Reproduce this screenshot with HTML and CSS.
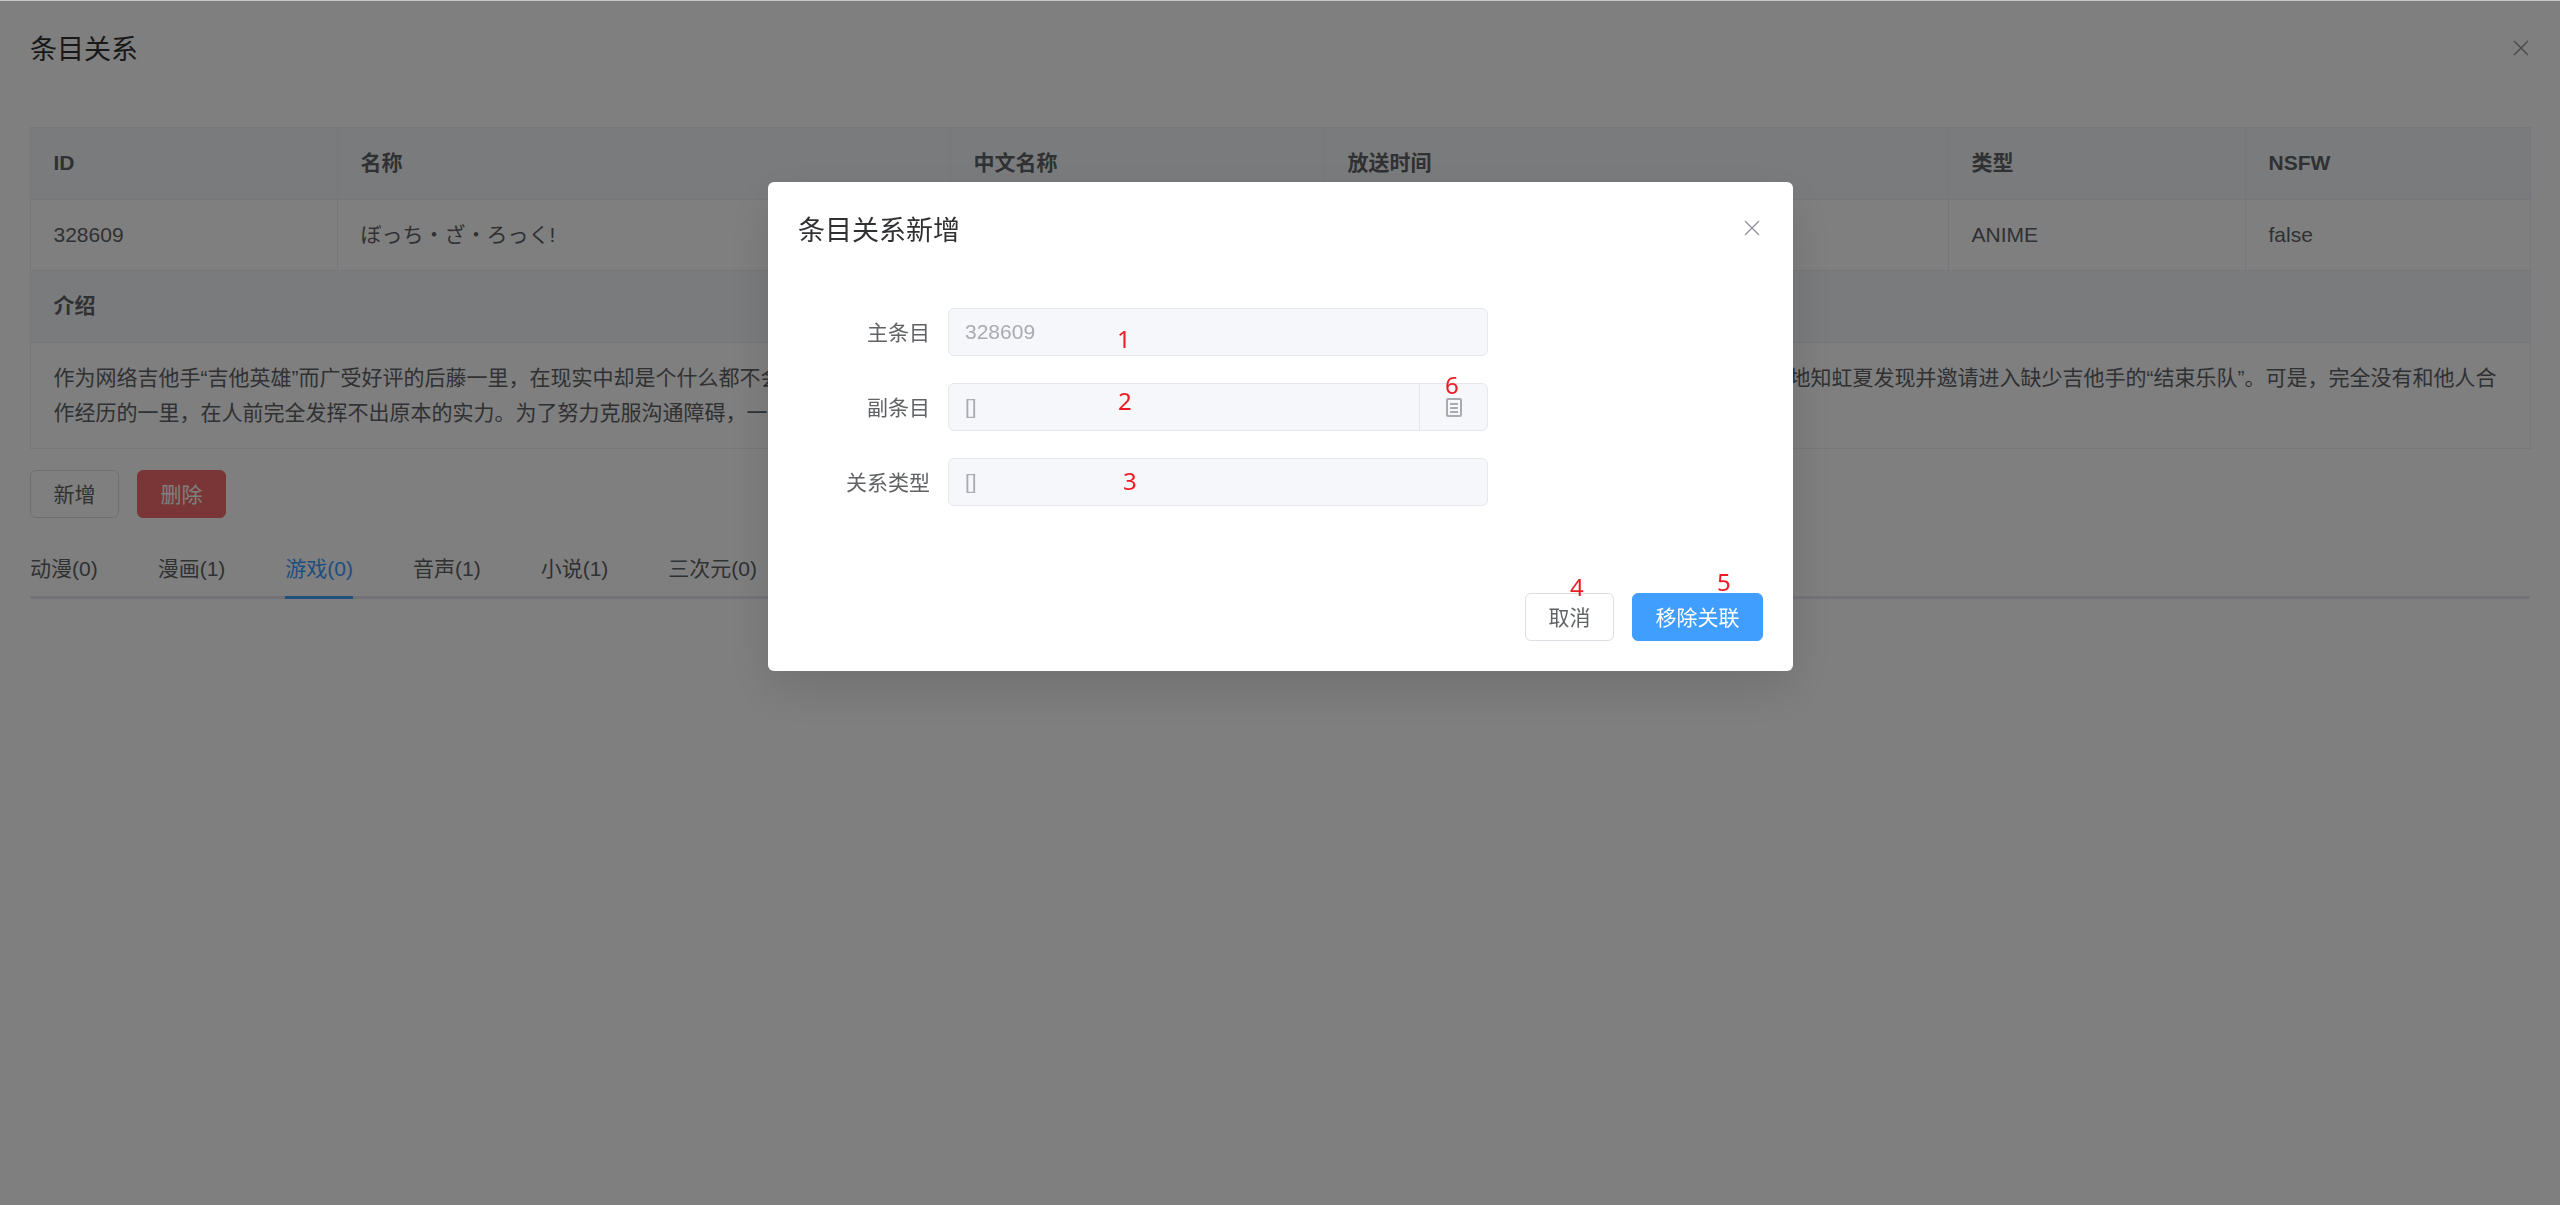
FILE: index.html
```html
<!DOCTYPE html>
<html lang="zh-CN">
<head>
  <meta charset="UTF-8">
  <meta name="viewport" content="width=device-width, initial-scale=1.0">
  <title>条目关系</title>
  <link rel="stylesheet" href="styles.css">
</head>
<body>

  <div class="page">
    <div class="page-header">
      <span class="page-title">条目关系</span>
      <svg class="close-icon page-close" viewBox="0 0 16 16"><path d="M1 1L15 15M15 1L1 15"/></svg>
    </div>

    <table class="info">
      <colgroup>
        <col class="col-id">
        <col class="col-name">
        <col class="col-cn">
        <col class="col-date">
        <col class="col-type">
        <col class="col-nsfw">
      </colgroup>
      <tr class="row-head">
        <th>ID</th>
        <th>名称</th>
        <th>中文名称</th>
        <th>放送时间</th>
        <th>类型</th>
        <th>NSFW</th>
      </tr>
      <tr class="row-body">
        <td>328609</td>
        <td>ぼっち・ざ・ろっく!</td>
        <td>孤独摇滚！</td>
        <td>2022-10-08</td>
        <td>ANIME</td>
        <td>false</td>
      </tr>
      <tr class="row-head">
        <th colspan="6">介绍</th>
      </tr>
      <tr class="row-summary">
        <td colspan="6">作为网络吉他手“吉他英雄”而广受好评的后藤一里，在现实中却是个什么都不会的超社恐阴角少女。虽然她总是渴望着能加入乐队，却因为不敢与人交流而一直独自练琴。某天，偶然她被伊地知虹夏发现并邀请进入缺少吉他手的“结束乐队”。可是，完全没有和他人合<br>作经历的一里，在人前完全发挥不出原本的实力。为了努力克服沟通障碍，一里在“结束乐队”中一点点地成长起来。</td>
      </tr>
    </table>

    <div class="actions">
      <button class="btn">新增</button>
      <button class="btn btn-danger">删除</button>
    </div>

    <div class="tabs">
      <div class="tab">动漫(0)</div>
      <div class="tab">漫画(1)</div>
      <div class="tab active">游戏(0)</div>
      <div class="tab">音声(1)</div>
      <div class="tab">小说(1)</div>
      <div class="tab">三次元(0)</div>
    </div>
  </div>

  <div class="overlay">
    <div class="dialog">
      <div class="dialog-header">条目关系新增</div>
      <svg class="close-icon dialog-close" viewBox="0 0 16 16"><path d="M1 1L15 15M15 1L1 15"/></svg>

      <div class="dialog-body">
        <div class="form-row">
          <label>主条目</label>
          <div class="field">328609</div>
        </div>
        <div class="form-row">
          <label>副条目</label>
          <div class="field">
            <span class="field-text">[]</span>
            <span class="field-append">
              <svg class="doc-icon" viewBox="0 0 16 19">
                <rect x="1" y="1" width="14" height="17" rx="1"/>
                <path d="M4 6H12M4 10H12M4 14H12"/>
              </svg>
            </span>
          </div>
        </div>
        <div class="form-row">
          <label>关系类型</label>
          <div class="field">[]</div>
        </div>
      </div>

      <div class="dialog-footer">
        <button class="btn">取消</button>
        <button class="btn btn-primary">移除关联</button>
      </div>

      <span class="mark mark-1">1</span>
      <span class="mark mark-2">2</span>
      <span class="mark mark-3">3</span>
      <span class="mark mark-4">4</span>
      <span class="mark mark-5">5</span>
      <span class="mark mark-6">6</span>
    </div>
  </div>

</body>
</html>
```

FILE: styles.css
```css
* {
  box-sizing: border-box;
}
body {
  margin: 0;
  height: 100vh;
  overflow: hidden;
  background: #fff;
  color: #606266;
  font-family: "Liberation Sans", "Noto Sans CJK SC", sans-serif;
  font-size: 21px;
}
.page {
  padding: 30px;
}
.page-header {
  display: flex;
  justify-content: space-between;
  align-items: center;
  height: 36px;
  margin-bottom: 61px;
}
.page-title {
  padding-bottom: 2px;
  font-size: 27px;
  color: #303133;
}
.close-icon {
  width: 16px;
  height: 16px;
  fill: none;
  stroke: #909399;
  stroke-width: 1.4;
}
.page-close {
  margin-right: 1px;
}

/* info table */
.info {
  width: 2500px;
  table-layout: fixed;
  border-collapse: collapse;
}
.col-id { width: 307px; }
.col-name { width: 613px; }
.col-cn { width: 374px; }
.col-date { width: 624px; }
.col-type { width: 297px; }
.col-nsfw { width: 285px; }
.info th,
.info td {
  padding: 0 22.5px;
  border: 1px solid #ebeef5;
  text-align: left;
  line-height: 34.5px;
  overflow: hidden;
  white-space: nowrap;
}
.info th {
  background: #f5f7fa;
  font-weight: bold;
}
.row-head { height: 72px; }
.row-body { height: 71px; }
.row-summary { height: 106px; }

/* buttons */
.actions {
  display: flex;
  gap: 18px;
  margin-top: 21px;
}
.btn {
  height: 48px;
  padding: 0 22.5px 3px;
  border: 1px solid #dcdfe6;
  border-radius: 6px;
  background: #fff;
  color: #606266;
  font-family: inherit;
  font-size: 21px;
  cursor: pointer;
}
.btn-danger {
  border-color: #f56c6c;
  background: #f56c6c;
  color: #fff;
}
.btn-primary {
  border-color: #409eff;
  background: #409eff;
  color: #fff;
}

/* tabs */
.tabs {
  display: flex;
  gap: 60px;
  margin-top: 21px;
  box-shadow: inset 0 -3px 0 #e4e7ed;
}
.tab {
  height: 60px;
  line-height: 59px;
  color: #606266;
}
.tab.active {
  color: #409eff;
  box-shadow: inset 0 -3px 0 #409eff;
}

/* modal */
.overlay {
  position: fixed;
  top: 0;
  right: 0;
  bottom: 0;
  left: 0;
  border-top: 1px solid #c8c8c8;
  background: rgba(0, 0, 0, 0.5);
}
.dialog {
  position: relative;
  width: 1025px;
  height: 489px;
  margin: 181px 0 0 768px;
  border-radius: 6px;
  background: #fff;
  box-shadow: 0 18px 48px rgba(0, 0, 0, 0.12);
}
.dialog-header {
  padding: 31px 30px 27px;
  font-size: 27px;
  line-height: 36px;
  color: #303133;
}
.dialog-close {
  position: absolute;
  top: 38px;
  right: 33px;
}
.dialog-body {
  padding: 32px 30px 30px;
}
.form-row {
  display: flex;
  align-items: center;
  width: 690px;
  margin-bottom: 27px;
}
.form-row label {
  width: 150px;
  padding-right: 18px;
  padding-bottom: 3px;
  text-align: right;
}
.field {
  display: flex;
  align-items: center;
  flex: 1;
  height: 48px;
  padding-left: 16px;
  border: 1px solid #e4e7ed;
  border-radius: 6px;
  background: #f5f7fa;
  color: #a8abb2;
}
.field-text {
  flex: 1;
}
.field-append {
  display: flex;
  align-items: center;
  justify-content: center;
  width: 68px;
  height: 100%;
  border-left: 1px solid #e4e7ed;
}
.doc-icon {
  width: 16px;
  height: 19px;
  fill: none;
  stroke: #a8abb2;
  stroke-width: 2;
}
.dialog-footer {
  display: flex;
  justify-content: flex-end;
  gap: 18px;
  padding: 30px;
}

/* red numbers written on top of the form */
.mark {
  position: absolute;
  font-family: "Noto Sans", sans-serif;
  font-size: 24px;
  line-height: 24px;
  color: #ed1c24;
}
.mark-1 { left: 349px; top: 145px; }
.mark-2 { left: 350px; top: 207px; }
.mark-3 { left: 355px; top: 287px; }
.mark-4 { left: 802px; top: 393px; }
.mark-5 { left: 949px; top: 388px; }
.mark-6 { left: 677px; top: 191px; }
```
